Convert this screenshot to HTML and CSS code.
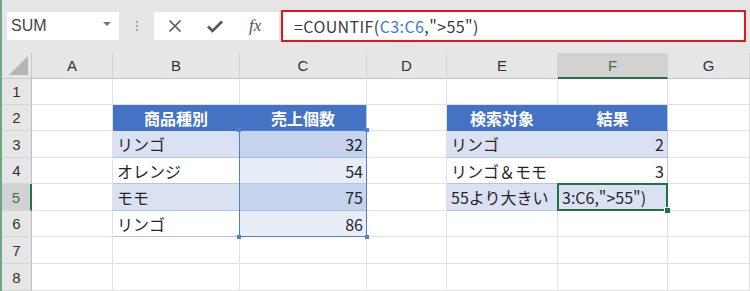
FILE: index.html
```html
<!DOCTYPE html>
<html lang="ja">
<head>
  <meta charset="UTF-8">
  <title>COUNTIF</title>
  <link rel="stylesheet" href="styles.css">
</head>
<body>

  <div class="app">
    <div class="toolbar">
      <div class="namebox"><span>SUM</span><span class="caret"></span></div>
      <div class="grip"><i></i><i></i><i></i></div>
      <div class="fxbox">
        <svg class="cancel" width="14" height="14" viewBox="0 0 14 14"><path d="M1.5 1.5 L12.5 12.5 M12.5 1.5 L1.5 12.5" stroke="#555" stroke-width="1.6" fill="none"/></svg>
        <svg class="enter" width="18" height="14" viewBox="0 0 18 14"><path d="M2 7.5 L6.5 12 L16 2.5" stroke="#555" stroke-width="2.6" fill="none"/></svg>
        <span class="fx">fx</span>
      </div>
      <div class="formula">=COUNTIF(<span class="ref">C3:C6</span>,"&gt;55")</div>
    </div>

    <div class="sheet">
      <div class="corner"></div>
      <div class="ch">A</div>
      <div class="ch">B</div>
      <div class="ch">C</div>
      <div class="ch">D</div>
      <div class="ch">E</div>
      <div class="ch active">F</div>
      <div class="ch">G</div>

      <div class="rh">1</div>
      <div class="c"></div><div class="c"></div><div class="c"></div><div class="c"></div><div class="c"></div><div class="c"></div><div class="c"></div>

      <div class="rh">2</div>
      <div class="c"></div>
      <div class="c th first">商品種別</div>
      <div class="c th last">売上個数</div>
      <div class="c"></div>
      <div class="c th first">検索対象</div>
      <div class="c th last">結果</div>
      <div class="c"></div>

      <div class="rh">3</div>
      <div class="c"></div>
      <div class="c band first">リンゴ</div>
      <div class="c sel-dark last num">32</div>
      <div class="c"></div>
      <div class="c band first">リンゴ</div>
      <div class="c band last num">2</div>
      <div class="c"></div>

      <div class="rh">4</div>
      <div class="c"></div>
      <div class="c plain first">オレンジ</div>
      <div class="c sel-light last num">54</div>
      <div class="c"></div>
      <div class="c plain first">リンゴ＆モモ</div>
      <div class="c plain last num">3</div>
      <div class="c"></div>

      <div class="rh active">5</div>
      <div class="c"></div>
      <div class="c band first">モモ</div>
      <div class="c sel-dark last num">75</div>
      <div class="c"></div>
      <div class="c band first">55より大きい</div>
      <div class="c band last edit">3:C6,"&gt;55")</div>
      <div class="c"></div>

      <div class="rh">6</div>
      <div class="c"></div>
      <div class="c plain first">リンゴ</div>
      <div class="c sel-light last num">86</div>
      <div class="c"></div><div class="c"></div><div class="c"></div><div class="c"></div>

      <div class="rh">7</div>
      <div class="c"></div><div class="c"></div><div class="c"></div><div class="c"></div><div class="c"></div><div class="c"></div><div class="c"></div>

      <div class="rh">8</div>
      <div class="c"></div><div class="c"></div><div class="c"></div><div class="c"></div><div class="c"></div><div class="c"></div><div class="c"></div>

      <!-- selection marks, drawn over the cells on the same grid -->
      <div class="marks">
        <div class="range">
          <span class="handle tl"></span>
          <span class="handle tr"></span>
          <span class="handle bl"></span>
          <span class="handle br"></span>
        </div>
        <div class="cursor"></div>
      </div>
    </div>
  </div>

</body>
</html>
```

FILE: styles.css
```css
body {
  margin: 0;
  font-family: 'Noto Sans CJK JP', sans-serif;
  color: #262626;
}

.app {
  width: 748px;
  height: 291px;
  overflow: hidden;
  border-left: 2px solid #6fa887;
  background: #fff;
}

/* formula bar */

.toolbar {
  height: 53px;
  background: #e6e6e6;
  display: flex;
  align-items: center;
  padding-left: 5px;
  box-sizing: border-box;
  padding-bottom: 1px;
}

.namebox {
  width: 112px;
  height: 28px;
  background: #fff;
  display: flex;
  align-items: center;
  justify-content: space-between;
  padding: 0 8px 0 4px;
  box-sizing: border-box;
  font-family: 'Liberation Sans', sans-serif;
  font-size: 16px;
  color: #444;
}

.caret {
  width: 0;
  height: 0;
  border-left: 4px solid transparent;
  border-right: 4px solid transparent;
  border-top: 4px solid #777;
  margin-bottom: 5px;
}

.grip {
  width: 35px;
  display: flex;
  flex-direction: column;
  align-items: center;
  gap: 2px;
}

.grip i {
  width: 2px;
  height: 2px;
  background: #a8a8a8;
}

.fxbox {
  width: 125px;
  height: 28px;
  background: #fff;
  display: flex;
  align-items: center;
  padding-left: 14px;
  box-sizing: border-box;
}

.enter {
  margin-left: 24px;
}

.fx {
  margin-left: 25px;
  font-family: 'Liberation Serif', serif;
  font-style: italic;
  font-size: 17px;
  color: #555;
}

.formula {
  margin-left: 2px;
  width: 465px;
  height: 32px;
  border: 2px solid #e8141c;
  background: #fff;
  box-sizing: border-box;
  display: flex;
  align-items: center;
  padding-left: 11px;
  font-size: 16px;
  letter-spacing: 0.4px;
  color: #3a3a3a;
  white-space: pre;
}

.ref {
  color: #3c78d0;
}

/* grid */

.sheet {
  position: relative;
}

.sheet,
.marks {
  display: grid;
  grid-template-columns: 30px 81px 127px 127px 80px 111px 110px 82px;
  grid-template-rows: 26px 26px 26px 27px 26px 27px 26px 27px 27px;
}

.corner,
.ch,
.rh {
  background: #e6e6e6;
  border-right: 1px solid #c9c9c9;
  border-bottom: 1px solid #c9c9c9;
  box-sizing: border-box;
  display: flex;
  align-items: center;
  justify-content: center;
  font-family: 'Liberation Sans', sans-serif;
  font-size: 15px;
  color: #333;
}

.ch {
  border-right-color: #d2d2d2;
  border-bottom-color: #c4c4c4;
}

.rh {
  border-right-color: #bdbdbd;
  border-bottom-color: #d4d4d4;
}

.corner {
  position: relative;
}

.corner::after {
  content: '';
  position: absolute;
  right: 3px;
  bottom: 3px;
  border-left: 19px solid transparent;
  border-bottom: 19px solid #b5b5b5;
}

.ch.active {
  background: #d2d2d2;
  border-bottom: 2px solid #217346;
  color: #44705a;
}

.rh.active {
  background: #d2d2d2;
  border-right: 2px solid #217346;
  color: #44705a;
}

.c {
  border-right: 1px solid #e1e1e1;
  border-bottom: 1px solid #e1e1e1;
  box-sizing: border-box;
  display: flex;
  align-items: center;
  padding: 0 4px;
  font-size: 16px;
  white-space: nowrap;
  overflow: hidden;
}

.th {
  background: #4472c4;
  border-color: #4472c4;
  color: #fff;
  font-weight: bold;
  justify-content: center;
}

.band {
  background: #d9e1f2;
  border-bottom-color: #b4c6e7;
}

.plain {
  background: #fff;
  border-bottom-color: #b4c6e7;
}

.sel-dark {
  background: #c6d3ec;
  border-bottom-color: #a9bde3;
}

.sel-light {
  background: #e8eef8;
  border-bottom-color: #b4c6e7;
}

.band.first,
.plain.first {
  border-right-color: transparent;
}

.last {
  border-right-color: #b4c6e7;
}

.num {
  justify-content: flex-end;
  padding-right: 3px;
}

.edit {
  padding-left: 4px;
}

/* selected range C3:C6 and active cell F5 */

.marks {
  position: absolute;
  inset: 0;
  pointer-events: none;
}

.range {
  grid-column: 4;
  grid-row: 4 / 8;
  margin: -1px 0 0 -1px;
  border: 1px solid #4f80d3;
  position: relative;
}

.handle {
  position: absolute;
  width: 4px;
  height: 4px;
  background: #4f80d3;
}

.tl { left: -3px; top: -3px; }
.tr { right: -3px; top: -3px; }
.bl { left: -3px; bottom: -3px; }
.br { right: -3px; bottom: -3px; }

.cursor {
  grid-column: 7;
  grid-row: 6;
  margin: -1px 0 0 -1px;
  border: 2px solid #217346;
  position: relative;
}

.cursor::after {
  content: '';
  position: absolute;
  right: -4px;
  bottom: -4px;
  width: 5px;
  height: 5px;
  background: #217346;
  border-left: 1px solid #fff;
  border-top: 1px solid #fff;
}
```
